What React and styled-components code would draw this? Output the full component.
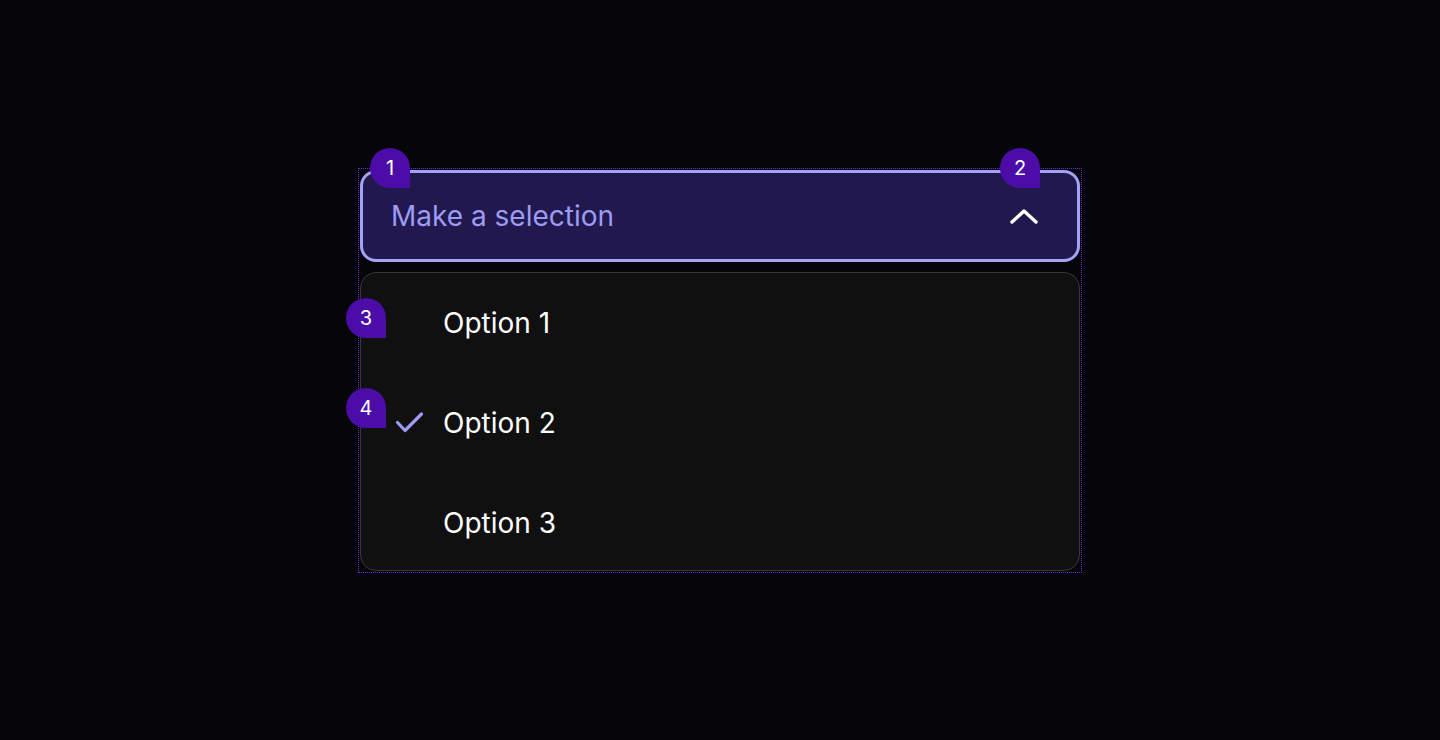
import React from "react";
import styled, { createGlobalStyle } from "styled-components";

const Global = createGlobalStyle`
  html, body { margin: 0; padding: 0; background: #060608; }
  body { font-family: Inter, "Noto Sans", sans-serif; }
`;

const Page = styled.div`
  min-height: 740px;
  display: flex;
  align-items: center;
  justify-content: center;
`;

const Wrapper = styled.div`
  position: relative;
  width: 720px;
  display: flex;
  flex-direction: column;
  gap: 10px;
  outline: 1px dotted #6d28d9;
  outline-offset: 1px;
`;

const Trigger = styled.button`
  box-sizing: border-box;
  height: 92px;
  width: 100%;
  display: flex;
  align-items: center;
  justify-content: space-between;
  padding: 0 38px 0 28px;
  background: #21184e;
  border: 3px solid #a3a2f7;
  border-radius: 16px;
  font-family: Inter, "Noto Sans", sans-serif;
  font-size: 28px;
  color: #9d9bf3;
  cursor: pointer;
`;

const Listbox = styled.ul`
  box-sizing: border-box;
  list-style: none;
  margin: 0;
  padding: 0;
  height: 299px;
  display: flex;
  flex-direction: column;
  background: #101010;
  border: 1px solid #383838;
  border-radius: 16px;
`;

const Option = styled.li`
  flex: none;
  height: 100px;
  display: grid;
  grid-template-columns: 30px 1fr;
  column-gap: 18px;
  align-items: center;
  padding-left: 34px;
  font-size: 28px;
  color: #ffffff;
`;

const CheckSlot = styled.span`
  display: flex;
  align-items: center;
  justify-content: center;
  height: 24px;
`;

const Badge = styled.span`
  position: absolute;
  width: 40px;
  height: 40px;
  border-radius: 20px 20px 0 20px;
  background: #4b0ca8;
  color: #ffffff;
  font-family: Inter, "Noto Sans", sans-serif;
  font-size: 20px;
  display: flex;
  align-items: center;
  justify-content: center;
  left: ${(p) => (p.$left != null ? `${p.$left}px` : "auto")};
  right: ${(p) => (p.$right != null ? `${p.$right}px` : "auto")};
  top: ${(p) => p.$top}px;
`;

const ChevronUp = () => (
  <svg width="30" height="20" viewBox="0 0 30 20" fill="none">
    <path
      d="M3 16 L15 5 L27 16"
      stroke="#ffffff"
      strokeWidth="3.4"
      strokeLinecap="round"
      strokeLinejoin="round"
    />
  </svg>
);

const Check = () => (
  <svg width="30" height="24" viewBox="0 0 30 24" fill="none">
    <path
      d="M2.5 11.5 L10 19.5 L26.5 3"
      stroke="#9d9bf3"
      strokeWidth="3.2"
      strokeLinecap="round"
      strokeLinejoin="round"
    />
  </svg>
);

const options = [
  { label: "Option 1", selected: false },
  { label: "Option 2", selected: true },
  { label: "Option 3", selected: false },
];

export default function App() {
  return (
    <>
      <Global />
      <Page>
        <Wrapper>
          <Trigger aria-expanded="true">
            <span>Make a selection</span>
            <ChevronUp />
          </Trigger>
          <Listbox role="listbox">
            {options.map((o) => (
              <Option key={o.label} role="option" aria-selected={o.selected}>
                <CheckSlot>{o.selected && <Check />}</CheckSlot>
                <span>{o.label}</span>
              </Option>
            ))}
          </Listbox>
          <Badge $left={10} $top={-22}>1</Badge>
          <Badge $right={40} $top={-22}>2</Badge>
          <Badge $left={-14} $top={128}>3</Badge>
          <Badge $left={-14} $top={218}>4</Badge>
        </Wrapper>
      </Page>
    </>
  );
}
